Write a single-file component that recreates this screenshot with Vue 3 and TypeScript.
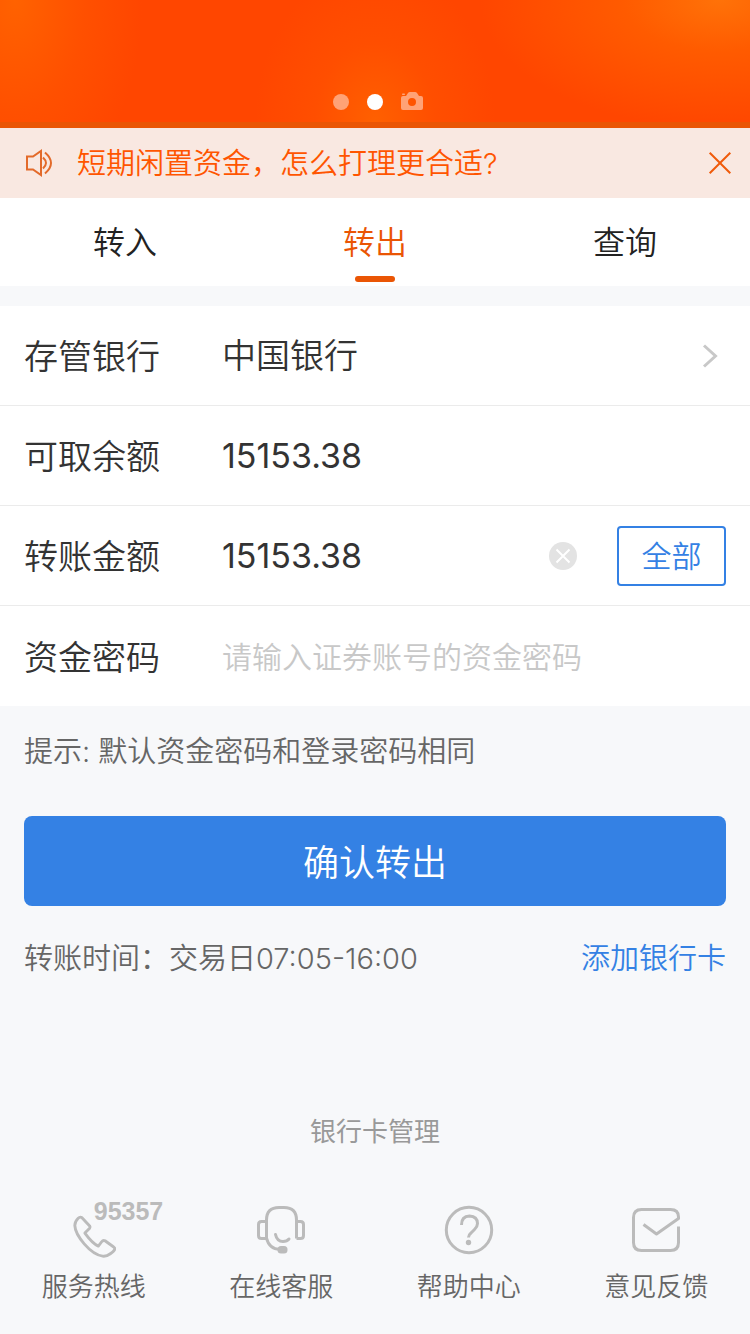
<script setup lang="ts">
import { ref } from 'vue'

type Tab = 'in' | 'out' | 'query'

const tabs: { id: Tab; label: string }[] = [
  { id: 'in', label: '转入' },
  { id: 'out', label: '转出' },
  { id: 'query', label: '查询' },
]

const activeTab = ref<Tab>('out')
const noticeVisible = ref(true)
const balance = '15153.38'
const amount = ref(balance)
const password = ref('')
</script>

<template>
  <div class="page">
    <header class="banner">
      <div class="pager">
        <span class="dot"></span>
        <span class="dot current"></span>
        <svg class="camera" viewBox="0 0 22 18" aria-hidden="true">
          <path
            fill-rule="evenodd"
            d="M0 6a2 2 0 0 1 2-2h3l2-3q.6-1 2-1h5q1.400 0 2 1l2 3h2a2 2 0 0 1 2 2v10a2 2 0 0 1-2 2H2a2 2 0 0 1-2-2zM11 6a4 4 0 1 0 0 8a4 4 0 0 0 0-8z"
          />
          <rect x="1" y="1.500" width="3" height="1.500" rx=".7" />
        </svg>
      </div>
    </header>

    <div v-if="noticeVisible" class="notice">
      <svg class="speaker" viewBox="0 0 28 28" aria-hidden="true">
        <path d="M2 7.500h6L16 2v24l-8-5.500H2z" />
        <path d="M18 8.500q6 5.500 0 11" />
        <path d="M20 3.500q12 10.500 0 21" />
      </svg>
      <a class="notice-text" href="#">短期闲置资金，怎么打理更合适?</a>
      <button class="close" type="button" aria-label="关闭" @click="noticeVisible = false">
        <svg viewBox="0 0 22 22"><path d="M.7.7l20.600 20.600M21.300.7L.7 21.300" /></svg>
      </button>
    </div>

    <nav class="tabs">
      <button
        v-for="tab in tabs"
        :key="tab.id"
        type="button"
        class="tab"
        :class="{ active: activeTab === tab.id }"
        @click="activeTab = tab.id"
      >
        {{ tab.label }}
      </button>
    </nav>

    <form @submit.prevent>
      <div class="rows">
        <div class="row">
          <label class="label" for="bank">存管银行</label>
          <button id="bank" class="bank" type="button">
            <span>中国银行</span>
            <svg viewBox="0 0 16 24" aria-hidden="true"><path d="M2 1.500L13.500 12L2 22.500" /></svg>
          </button>
        </div>
        <div class="row">
          <label class="label" for="balance">可取余额</label>
          <output id="balance" class="value">{{ balance }}</output>
        </div>
        <div class="row">
          <label class="label" for="amount">转账金额</label>
          <input id="amount" v-model="amount" class="value" type="text" inputmode="decimal" />
          <button class="clear" type="button" aria-label="清除" @click="amount = ''">
            <svg viewBox="0 0 28 28">
              <circle cx="14" cy="14" r="14" />
              <path d="M7.500 7.500l13 13M20.500 7.500l-13 13" />
            </svg>
          </button>
          <button class="all" type="button" @click="amount = balance">全部</button>
        </div>
        <div class="row">
          <label class="label" for="password">资金密码</label>
          <input
            id="password"
            v-model="password"
            class="value password"
            type="password"
            placeholder="请输入证券账号的资金密码"
          />
        </div>
      </div>
      <p class="hint">提示: 默认资金密码和登录密码相同</p>
      <button class="submit" type="submit">确认转出</button>
    </form>

    <div class="info">
      <span>转账时间：交易日07:05-16:00</span>
      <a href="#">添加银行卡</a>
    </div>

    <a class="manage" href="#">银行卡管理</a>

    <footer class="services">
      <a class="service" href="#">
        <span class="icon">
          <svg class="phone" viewBox="0 0 48 48" aria-hidden="true">
            <path
              transform="translate(0 5.500) scale(.96)"
              d="M12.500 6.500Q10.500 5 8.500 7Q5 10.500 5 14.500C5.500 25 21 44.500 34 46.500Q38 47 42 44Q46 41 46.500 39.500Q47 38 45.500 37L36.500 30.500Q34.500 29.500 33 31.500L29.500 36Q23.500 33.500 15.500 22.500L20.500 17.500Q21.500 16.500 20.500 15z"
            />
          </svg>
          <span class="number">95357</span>
        </span>
        <span>服务热线</span>
      </a>
      <a class="service" href="#">
        <span class="icon">
          <svg viewBox="0 0 48 48" aria-hidden="true">
            <path d="M9.500 33V14Q9.500 1.500 22 1.500H27Q39.500 1.500 39.500 14V32.500" />
            <path d="M9.500 15.500H4.500Q1.500 15.500 1.500 18.500V29.500Q1.500 32.500 4.500 32.500H9.500" />
            <path d="M39.500 15.500H43.500Q46.500 15.500 46.500 18.500V29.500Q46.500 32.500 43.500 32.500H39.500" />
            <path d="M9.500 32Q12 43 23 43.500" />
            <path d="M18.500 28.500Q20 35.500 26 35.500Q30 35.500 32 33" stroke-linecap="round" />
            <rect class="solid" x="20.500" y="40" width="10" height="7.500" rx="3.500" />
          </svg>
        </span>
        <span>在线客服</span>
      </a>
      <a class="service" href="#">
        <span class="icon">
          <svg viewBox="0 0 48 48" aria-hidden="true">
            <circle cx="24" cy="24" r="22.700" />
            <path d="M16.500 19Q16.500 10 24.500 10Q32.500 10.500 32.500 17.500Q32.500 20.500 29.500 23.500L26 27Q23.500 29 23.500 31.500" />
            <circle class="solid" cx="23.500" cy="36.500" r="2.700" />
          </svg>
        </span>
        <span>帮助中心</span>
      </a>
      <a class="service" href="#">
        <span class="icon">
          <svg viewBox="0 0 48 48" aria-hidden="true">
            <path d="M11.500 18.500L24.500 28L46.500 12.500V11Q46.500 3.500 38.500 3.500H9.500Q1.500 3.500 1.500 11.500V36.500Q1.500 44.500 9.500 44.500H38.500Q46.500 44.500 46.500 36.500V20.500" />
          </svg>
        </span>
        <span>意见反馈</span>
      </a>
    </footer>
  </div>
</template>

<style>
body {
  background: #f7f8fa;
}
</style>

<style scoped>
* {
  box-sizing: border-box;
}

.page {
  min-height: 100vh;
  background: #f7f8fa;
  color: #333;
  font-family: Inter, "Noto Sans CJK SC", sans-serif;
  font-size: 29px;
  font-weight: 350;
  line-height: 40px;
}

button,
input {
  margin: 0;
  padding: 0;
  border: 0;
  border-radius: 0;
  outline: 0;
  background: none;
  color: inherit;
  font: inherit;
}

a {
  color: inherit;
  text-decoration: none;
}

svg {
  display: block;
  overflow: visible;
  fill: none;
}

.banner {
  display: flex;
  align-items: flex-end;
  justify-content: center;
  height: 128px;
  padding-bottom: 12px;
  border-bottom: 6px solid #ea5504;
  background:
    radial-gradient(ellipse 32% 105% at 96% 0, #ff7208, rgb(255 98 0 / 75%) 40%, rgb(255 70 0 / 0)),
    radial-gradient(ellipse 17% 170% at 2% 0, #ff6200, rgb(255 84 0 / 70%) 55%, rgb(255 70 0 / 0)),
    radial-gradient(ellipse 16% 130% at 50% 100%, #ff6000, rgb(255 84 0 / 60%) 50%, rgb(255 70 0 / 0)),
    #ff4600;
}

.pager {
  display: flex;
  align-items: flex-end;
  gap: 18px;
  padding-left: 6px;
}

.dot {
  width: 16px;
  height: 16px;
  border-radius: 50%;
  background: #ffa276;
}

.dot.current {
  background: #fff;
}

.camera {
  width: 22px;
  height: 18px;
  fill: #ffa276;
}

.notice {
  display: flex;
  align-items: center;
  height: 70px;
  padding: 0 19px 0 25px;
  background: #f9e8e1;
  color: #ff5500;
}

.speaker {
  width: 28px;
  height: 28px;
  margin-right: 24px;
  stroke: #e36a2a;
  stroke-width: 2;
}

.notice-text {
  flex: 1;
  padding-top: 2px;
}

.close svg {
  width: 22px;
  height: 22px;
  stroke: #f05a0a;
  stroke-width: 2;
}

.tabs {
  display: flex;
  height: 88px;
  margin-bottom: 20px;
  background: #fff;
  color: #222;
}

.tab {
  display: flex;
  flex: 1;
  flex-direction: column;
  align-items: center;
  justify-content: space-between;
  padding: 21px 0 4px;
  font-size: 32px;
  line-height: 48px;
}

.tab::after {
  width: 40px;
  height: 6px;
  border-radius: 3px;
  content: '';
}

.tab.active {
  color: #ea5504;
}

.tab.active::after {
  background: #ea5504;
}

.rows {
  background: #fff;
}

.row {
  display: flex;
  align-items: center;
  height: 100px;
  padding: 0 24px;
  border-bottom: 1px solid #ebebeb;
  font-size: 34px;
}

.row:last-child {
  border-bottom: 0;
}

.label {
  width: 198px;
  flex: none;
  padding-top: 3px;
}

.value {
  flex: 1;
  min-width: 0;
  font-weight: 400;
}

.password {
  font-weight: 350;
}

.password::placeholder {
  color: #c8c8c8;
  font-size: 30px;
  opacity: 1;
}

.bank {
  display: flex;
  flex: 1;
  align-items: center;
  justify-content: space-between;
  padding-right: 8px;
}

.bank svg {
  width: 16px;
  height: 24px;
  stroke: #c8c8c8;
  stroke-width: 3;
}

.clear {
  margin: 0 40px;
}

.clear svg {
  width: 28px;
  height: 28px;
  fill: #e3e3e3;
  stroke-width: 2;
}

.clear path {
  stroke: #fff;
}

.all {
  width: 109px;
  height: 60px;
  border: 2px solid #3481e4;
  border-radius: 4px;
  color: #3481e4;
  font-size: 30px;
}

.hint {
  margin: 0;
  padding: 26px 24px 44px;
  color: #666;
}

.submit {
  display: block;
  width: calc(100% - 48px);
  height: 90px;
  margin: 0 24px;
  padding-top: 3px;
  border-radius: 8px;
  background: #3481e4;
  color: #fff;
  font-size: 36px;
}

.info {
  display: flex;
  justify-content: space-between;
  padding: 33px 24px 0;
  color: #666;
}

.info a {
  color: #3481e4;
}

.manage {
  display: block;
  width: max-content;
  margin: 133px auto 52px;
  color: #999;
  font-size: 26px;
  font-weight: 400;
}

.services {
  display: flex;
  color: #666;
  font-size: 26px;
}

.service {
  display: flex;
  flex: 1;
  flex-direction: column;
  align-items: center;
  gap: 13px;
  padding-bottom: 19px;
}

.icon {
  position: relative;
  width: 48px;
  height: 48px;
  margin-top: 2px;
}

.icon svg {
  width: 48px;
  height: 48px;
  stroke: #bbb;
  stroke-width: 3;
  stroke-linejoin: round;
}

.icon .solid {
  fill: #bbb;
  stroke: none;
}

.number {
  position: absolute;
  top: -7px;
  left: 24px;
  color: #bbb;
  font-family: "Liberation Sans", sans-serif;
  font-size: 25px;
  font-weight: 700;
  line-height: 24px;
}
</style>
